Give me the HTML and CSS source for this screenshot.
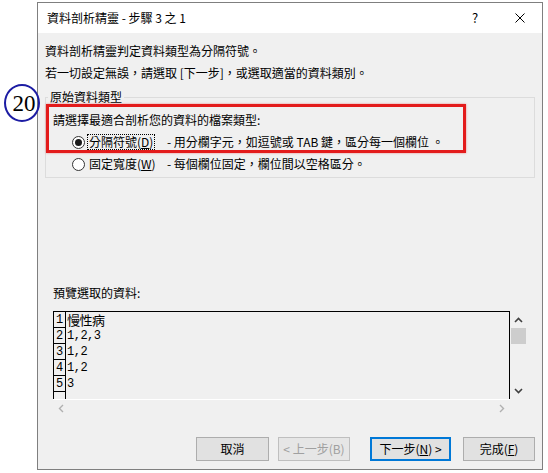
FILE: index.html
```html
<!DOCTYPE html>
<html lang="zh-Hant">
<head>
<meta charset="utf-8">
<title>資料剖析精靈</title>
<link rel="stylesheet" href="styles.css">
</head>
<body>
<div class="dialog">
  <div class="titlebar">
    <span class="title">資料剖析精靈 - 步驟 3 之 1</span>
    <span class="help">?</span>
    <span class="close"><svg width="10" height="10" viewBox="0 0 10 10"><path d="M0.5 0.5 L9.5 9.5 M9.5 0.5 L0.5 9.5" stroke="#000" stroke-width="1" fill="none"/></svg></span>
  </div>
  <div class="body">
    <p class="line">資料剖析精靈判定資料類型為分隔符號。</p>
    <p class="line l2">若一切設定無誤，請選取 [下一步]，或選取適當的資料類別。</p>
    <fieldset class="group">
      <legend>原始資料類型</legend>
      <div class="redbox">
        <div class="prompt">請選擇最適合剖析您的資料的檔案類型:</div>
        <div class="opt">
          <span class="opt-left">
            <span class="radio checked"></span>
            <span class="optlabel focused">分隔符號(<u>D</u>)</span>
          </span>
          <span class="desc">- 用分欄字元，如逗號或 TAB 鍵，區分每一個欄位 。</span>
        </div>
      </div>
      <div class="opt opt2">
        <span class="opt-left">
          <span class="radio"></span>
          <span class="optlabel">固定寬度(<u>W</u>)</span>
        </span>
        <span class="desc">- 每個欄位固定，欄位間以空格區分。</span>
      </div>
    </fieldset>
    <div class="pv-label">預覽選取的資料:</div>
    <div class="preview">
      <div class="pv-content">
        <div class="row"><span class="num">1</span><span class="cell cjk">慢性病</span></div>
        <div class="row"><span class="num">2</span><span class="cell">1,2,3</span></div>
        <div class="row"><span class="num">3</span><span class="cell">1,2</span></div>
        <div class="row"><span class="num">4</span><span class="cell">1,2</span></div>
        <div class="row"><span class="num">5</span><span class="cell">3</span></div>
        <div class="row"><span class="num"></span><span class="cell"></span></div>
      </div>
      <div class="vscroll">
        <span class="arrow"><svg width="9" height="6" viewBox="0 0 9 6"><polyline points="1,5 4.5,1.5 8,5" fill="none" stroke="#404040" stroke-width="1.6"/></svg></span>
        <span class="thumb"></span>
        <span class="spacer"></span>
        <span class="arrow"><svg width="9" height="6" viewBox="0 0 9 6"><polyline points="1,1 4.5,4.5 8,1" fill="none" stroke="#404040" stroke-width="1.6"/></svg></span>
      </div>
      <div class="hscroll">
        <svg width="6" height="9" viewBox="0 0 6 9"><polyline points="5,1 1.5,4.5 5,8" fill="none" stroke="#b0b0b0" stroke-width="1.4"/></svg>
        <svg width="6" height="9" viewBox="0 0 6 9"><polyline points="1,1 4.5,4.5 1,8" fill="none" stroke="#b0b0b0" stroke-width="1.4"/></svg>
      </div>
      <div class="corner"></div>
    </div>
    <div class="buttons">
      <button class="btn b-cancel">取消</button>
      <button class="btn b-back" disabled>&lt; 上一步(B)</button>
      <button class="btn b-next">下一步(<u>N</u>) &gt;</button>
      <button class="btn b-finish">完成(<u>F</u>)</button>
    </div>
  </div>
</div>
<div class="badge">20</div>
</body>
</html>
```
FILE: styles.css
```css
* { box-sizing: border-box; }
html, body { margin: 0; padding: 0; background: #fff; }
body {
  font-family: "Noto Sans CJK TC", "Noto Sans", sans-serif;
  font-size: 12px;
  color: #000;
  position: relative;
  width: 548px;
  height: 473px;
  overflow: hidden;
}
.dialog {
  margin: 2px 0 0 37px;
  width: 506px;
  height: 468px;
  border: 1px solid #7f7f7f;
  background: #f0f0f0;
  display: flex;
  flex-direction: column;
}
.titlebar {
  height: 30px;
  flex: none;
  background: #fff;
  display: flex;
  align-items: center;
  padding-left: 9px;
}
.title { flex: 1; line-height: 16px; }
.help { width: 12px; text-align: center; font-size: 13px; line-height: 16px; margin-right: 34px; }
.close { width: 10px; height: 10px; display: flex; margin-right: 17px; }

.body {
  flex: 1;
  display: flex;
  flex-direction: column;
  padding: 10px 7px 8px 7px;
}
.line { margin: 0; line-height: 16px; white-space: nowrap; }
.l2 { margin-top: 6px; }

.group {
  margin: 8px 0 0 0;
  padding: 0 0 5px 0;
  border: 1px solid #dcdcdc;
  min-width: 0;
}
.group legend { padding: 0 2px; margin-left: 2px; line-height: 16px; }

.redbox {
  margin-top: -1px;
  width: 420px;
  height: 49px;
  border: 3px solid #e31b1b;
  box-shadow: 0 0 2px rgba(230, 30, 30, 0.5);
  padding: 5px 0 0 4px;
}
.prompt { line-height: 16px; white-space: nowrap; }
.opt { display: flex; align-items: center; height: 16px; margin-top: 6px; white-space: nowrap; }
.opt2 { margin-top: 3px; padding-left: 7px; }
.opt-left { width: 114px; flex: none; display: flex; align-items: center; }
.radio {
  width: 13px;
  height: 13px;
  margin-left: 19px;
  border: 1px solid #333;
  border-radius: 50%;
  background: #fff;
  display: flex;
  align-items: center;
  justify-content: center;
  flex: none;
}
.radio.checked::after {
  content: "";
  width: 7px;
  height: 7px;
  border-radius: 50%;
  background: #1a1a1a;
}
.optlabel {
  margin-left: 2px;
  padding: 0 1px;
  border: 1px dotted transparent;
  line-height: 14px;
  white-space: nowrap;
  flex: none;
}
.optlabel.focused { border-color: #000; }
.desc { line-height: 16px; }

.pv-label { margin-top: 107px; padding-left: 8px; line-height: 16px; }
.preview {
  margin: 10px 0 0 8px;
  width: 474px;
  display: grid;
  grid-template-columns: 457px 17px;
  grid-template-rows: 88px 18px;
}
.pv-content {
  border-top: 1px solid #000;
  border-left: 1px solid #000;
  border-right: 1px solid #000;
  overflow: hidden;
}
.row { display: flex; height: 16px; }
.num {
  width: 12px;
  flex: none;
  border-right: 1px solid #000;
  border-bottom: 1px solid #000;
  font-family: "Liberation Mono", monospace;
  font-size: 12px;
  line-height: 17px;
  text-align: center;
}
.cell {
  padding-left: 1px;
  font-family: "Liberation Mono", monospace;
  font-size: 12px;
  letter-spacing: -0.5px;
  line-height: 16px;
}
.cell.cjk {
  font-family: "Noto Sans CJK TC", sans-serif;
  font-size: 13px;
  letter-spacing: -0.5px;
  font-weight: 400;
}
.vscroll { display: flex; flex-direction: column; align-items: center; }
.vscroll .arrow { height: 17px; display: flex; align-items: center; justify-content: center; flex: none; }
.thumb { width: 15px; height: 16px; background: #cdcdcd; flex: none; }
.spacer { flex: 1; }
.hscroll {
  border-top: 1px solid #fff;
  display: flex;
  align-items: center;
  justify-content: space-between;
  padding: 0 5px 0 5px;
}

.buttons { margin-top: 20px; display: flex; justify-content: flex-end; }
.btn {
  height: 24px;
  font-family: "Noto Sans CJK TC", "Noto Sans", sans-serif;
  font-size: 12px;
  color: #000;
  background: #e1e1e1;
  border: 1px solid #adadad;
  padding: 0;
  line-height: 16px;
}
.b-cancel { width: 73px; margin-right: 9px; }
.b-back { width: 72px; margin-right: 20px; color: #a0a0a0; border-color: #bfbfbf; background: #e6e6e6; }
.b-next { width: 81px; margin-right: 12px; border: 2px solid #0078d7; background: #e1e1e1; }
.b-finish { width: 72px; }

.badge {
  position: absolute;
  left: 4px;
  top: 84px;
  width: 36px;
  height: 38px;
  border: 2px solid #1c1ca3;
  border-radius: 50%;
  font-family: "Liberation Serif", serif;
  font-size: 23px;
  display: flex;
  align-items: center;
  justify-content: center;
  padding-left: 4px;
  padding-top: 1px;
}
```
